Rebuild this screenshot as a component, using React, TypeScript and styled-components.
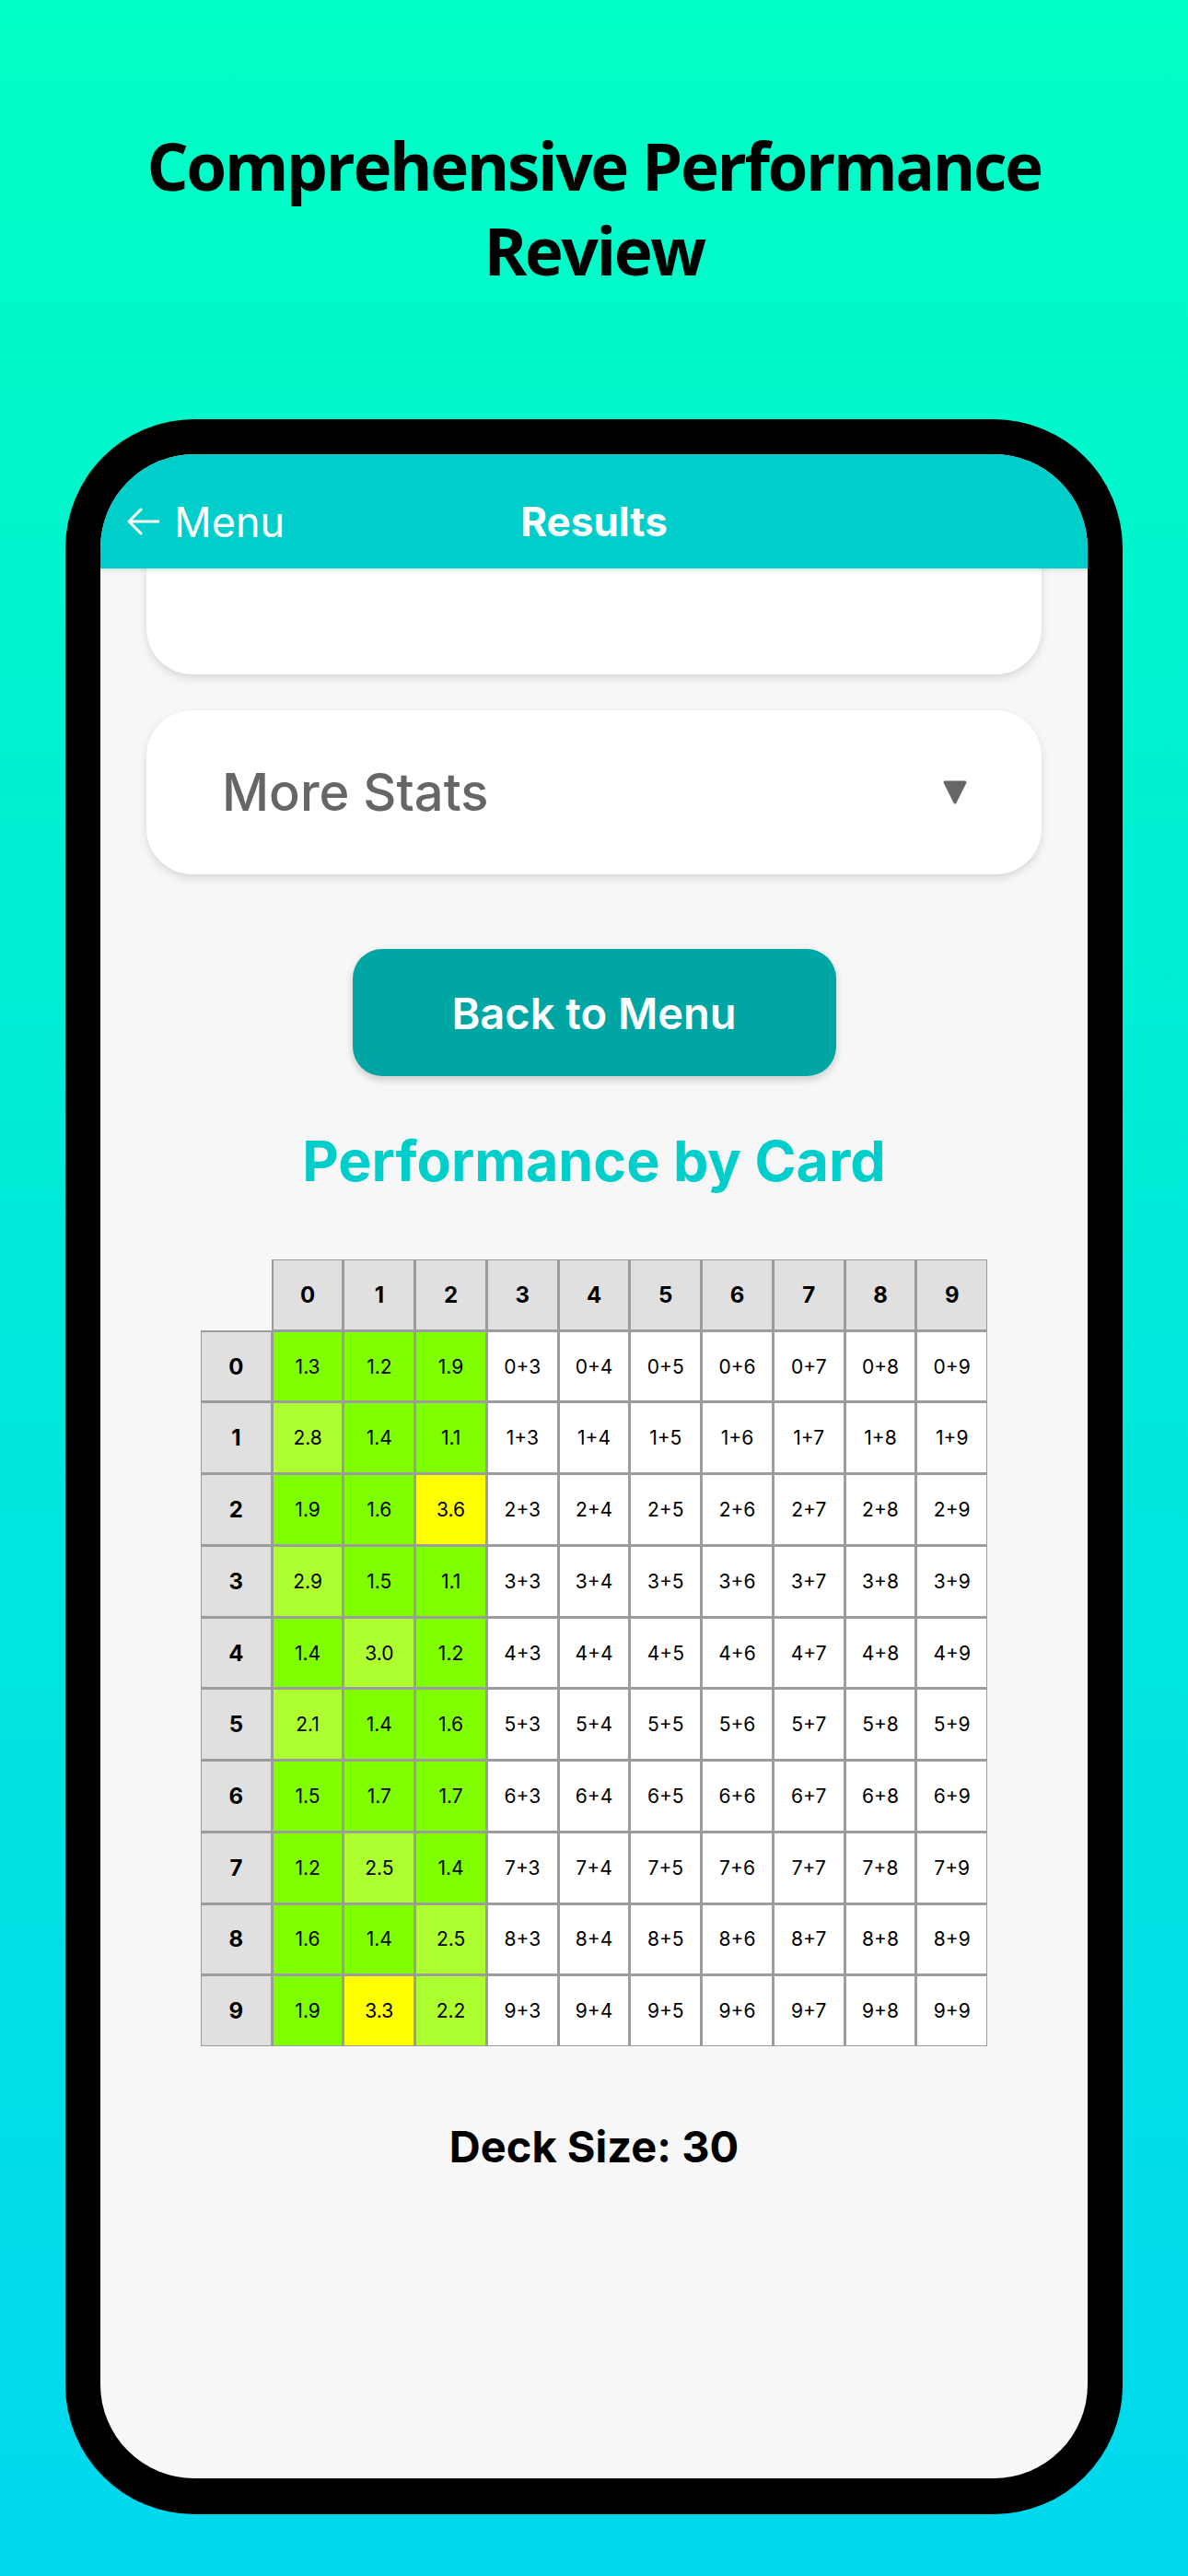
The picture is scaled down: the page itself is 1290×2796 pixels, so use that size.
import styled, { createGlobalStyle } from "styled-components";

const GlobalStyle = createGlobalStyle`
  html, body {
    margin: 0;
    padding: 0;
  }
  body {
    width: 1290px;
    min-height: 2796px;
    background: linear-gradient(180deg, #00ffc4 0%, #00ecd6 40%, #00d8ee 100%);
    font-family: Inter, "Noto Sans", sans-serif;
  }
`;

const Page = styled.div`
  width: 1290px;
  height: 2796px;
  display: flex;
  flex-direction: column;
  align-items: center;
`;

const Title = styled.h1`
  margin: 134px 0 0;
  font-family: "Open Sans", "Noto Sans", sans-serif;
  font-weight: 700;
  font-size: 71px;
  line-height: 92px;
  letter-spacing: -2.4px;
  text-align: center;
  color: #000;
`;

const Phone = styled.div`
  margin-top: 137px;
  width: 1148px;
  height: 2274px;
  box-sizing: border-box;
  background: #000;
  border-radius: 140px;
  padding: 38px 38px 39px;
  display: flex;
`;

const Screen = styled.div`
  flex: 1;
  background: #f7f7f7;
  border-radius: 102px;
  overflow: hidden;
  display: flex;
  flex-direction: column;
`;

const NavBar = styled.header`
  height: 124px;
  box-sizing: border-box;
  padding: 22px 28px 0;
  background: #00cecb;
  box-shadow: 0 2px 3px rgba(0, 0, 0, 0.12);
  display: grid;
  grid-template-columns: 1fr auto 1fr;
  align-items: center;
  color: #fff;
  position: relative;
  z-index: 1;
`;

const BackLink = styled.div`
  display: flex;
  align-items: center;
  gap: 16px;
  font-size: 45px;
  font-weight: 400;
`;

const NavTitle = styled.div`
  font-size: 44px;
  font-weight: 700;
`;

const ScrollArea = styled.main`
  flex: 1;
  overflow: hidden;
  padding: 0 50px;
  display: flex;
  flex-direction: column;
`;

const Card = styled.section<{ $height: number; $offset?: number }>`
  flex-shrink: 0;
  height: ${(p) => p.$height}px;
  margin-top: ${(p) => p.$offset ?? 0}px;
  background: #fff;
  border-radius: 50px;
  box-shadow: 0 4px 10px rgba(0, 0, 0, 0.13);
  box-sizing: border-box;
  padding: 0 80px 0 82px;
  display: flex;
  align-items: center;
  justify-content: space-between;
`;

const CardTitle = styled.span`
  font-size: 56px;
  font-weight: 500;
  color: #666;
`;

const MenuButton = styled.button`
  align-self: center;
  flex-shrink: 0;
  margin-top: 81px;
  width: 525px;
  height: 138px;
  border: none;
  border-radius: 32px;
  background: #00a6a3;
  box-shadow: 0 4px 8px rgba(0, 0, 0, 0.18);
  color: #fff;
  font-family: Inter, "Noto Sans", sans-serif;
  font-size: 47px;
  font-weight: 600;
`;

const SectionTitle = styled.h2`
  margin: 54px 0 0;
  font-size: 61px;
  line-height: 76px;
  font-weight: 700;
  color: #00cecb;
  text-align: center;
`;

const Grid = styled.div`
  align-self: center;
  flex-shrink: 0;
  margin-top: 69px;
  width: 854px;
  display: grid;
  grid-template-columns: repeat(11, 1fr);
  gap: 1px;
  background: #9c9c9c;
`;

const Cell = styled.div<{ $kind: "corner" | "head" | "data"; $bg?: string }>`
  aspect-ratio: 1;
  box-sizing: border-box;
  display: flex;
  align-items: center;
  justify-content: center;
  color: #000;
  border: ${(p) => (p.$kind === "corner" ? "none" : "1px solid #9c9c9c")};
  background: ${(p) =>
    p.$kind === "corner" ? "#f7f7f7" : p.$kind === "head" ? "#e0e0e0" : p.$bg ?? "#fff"};
  font-size: ${(p) => (p.$kind === "head" ? 24 : 21)}px;
  font-weight: ${(p) => (p.$kind === "head" ? 700 : 400)};
`;

const DeckSize = styled.p`
  margin: 81px 0 0;
  font-size: 47px;
  line-height: 56px;
  font-weight: 700;
  color: #000;
  text-align: center;
`;

const SCORES: number[][] = [
  [1.3, 1.2, 1.9],
  [2.8, 1.4, 1.1],
  [1.9, 1.6, 3.6],
  [2.9, 1.5, 1.1],
  [1.4, 3.0, 1.2],
  [2.1, 1.4, 1.6],
  [1.5, 1.7, 1.7],
  [1.2, 2.5, 1.4],
  [1.6, 1.4, 2.5],
  [1.9, 3.3, 2.2],
];

const DIGITS = [0, 1, 2, 3, 4, 5, 6, 7, 8, 9];

function scoreColor(value: number) {
  if (value < 2) return "#7fff00";
  if (value <= 3) return "#adff2f";
  return "#ffff00";
}

function BackArrow() {
  return (
    <svg width="36" height="30" viewBox="0 0 36 30" fill="none">
      <path
        d="M35 15H3M16 2L3 15l13 13"
        stroke="#fff"
        strokeWidth="3"
        strokeLinecap="round"
        strokeLinejoin="round"
      />
    </svg>
  );
}

function Caret() {
  return (
    <svg width="28" height="28" viewBox="0 0 28 28">
      <path
        d="M3 3h22L14 25z"
        fill="#666"
        stroke="#666"
        strokeWidth="3"
        strokeLinejoin="round"
      />
    </svg>
  );
}

function CardMatrix() {
  return (
    <Grid>
      <Cell $kind="corner" />
      {DIGITS.map((d) => (
        <Cell key={`h${d}`} $kind="head">
          {d}
        </Cell>
      ))}
      {DIGITS.map((row) => [
        <Cell key={`r${row}`} $kind="head">
          {row}
        </Cell>,
        ...DIGITS.map((col) => {
          const score = SCORES[row][col];
          return score !== undefined ? (
            <Cell key={`${row}-${col}`} $kind="data" $bg={scoreColor(score)}>
              {score.toFixed(1)}
            </Cell>
          ) : (
            <Cell key={`${row}-${col}`} $kind="data">
              {row}+{col}
            </Cell>
          );
        }),
      ])}
    </Grid>
  );
}

export default function App() {
  return (
    <Page>
      <GlobalStyle />
      <Title>
        Comprehensive Performance
        <br />
        Review
      </Title>
      <Phone>
        <Screen>
          <NavBar>
            <BackLink>
              <BackArrow />
              Menu
            </BackLink>
            <NavTitle>Results</NavTitle>
            <span />
          </NavBar>
          <ScrollArea>
            <Card $height={175} $offset={-60} />
            <Card $height={178} $offset={39}>
              <CardTitle>More Stats</CardTitle>
              <Caret />
            </Card>
            <MenuButton>Back to Menu</MenuButton>
            <SectionTitle>Performance by Card</SectionTitle>
            <CardMatrix />
            <DeckSize>Deck Size: 30</DeckSize>
          </ScrollArea>
        </Screen>
      </Phone>
    </Page>
  );
}
